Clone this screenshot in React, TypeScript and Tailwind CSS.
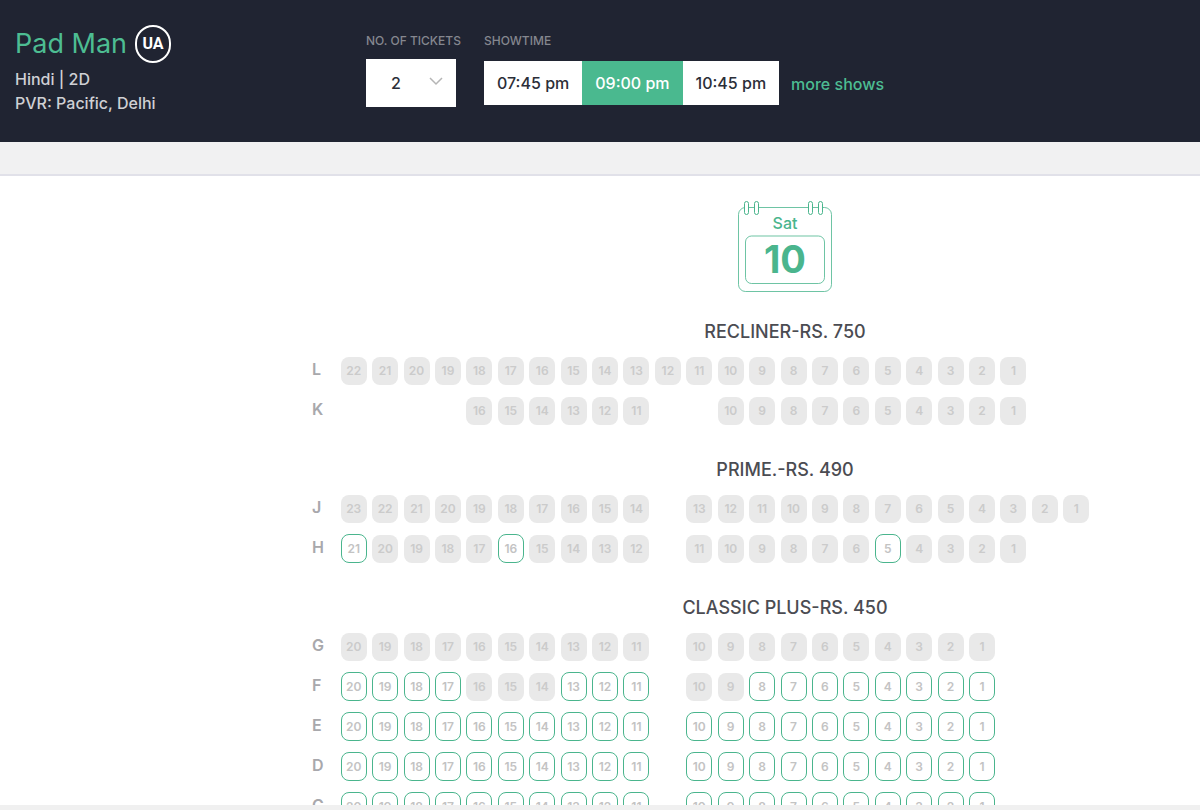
import { clsx } from "clsx";

type SeatBlock = { startCol: number; from: number; to: number };

type SeatRowData = {
  name: string;
  blocks: SeatBlock[];
  available: number[];
};

type SectionData = {
  title: string;
  rows: SeatRowData[];
};

const COLUMNS = 24;

function range(from: number, to: number) {
  return Array.from({ length: from - to + 1 }, (_, i) => from - i);
}

const CLASSIC_BLOCKS: SeatBlock[] = [
  { startCol: 1, from: 20, to: 11 },
  { startCol: 12, from: 10, to: 1 },
];

const SECTIONS: SectionData[] = [
  {
    title: "RECLINER-RS. 750",
    rows: [
      { name: "L", blocks: [{ startCol: 1, from: 22, to: 1 }], available: [] },
      {
        name: "K",
        blocks: [
          { startCol: 5, from: 16, to: 11 },
          { startCol: 13, from: 10, to: 1 },
        ],
        available: [],
      },
    ],
  },
  {
    title: "PRIME.-RS. 490",
    rows: [
      {
        name: "J",
        blocks: [
          { startCol: 1, from: 23, to: 14 },
          { startCol: 12, from: 13, to: 1 },
        ],
        available: [],
      },
      {
        name: "H",
        blocks: [
          { startCol: 1, from: 21, to: 12 },
          { startCol: 12, from: 11, to: 1 },
        ],
        available: [21, 16, 5],
      },
    ],
  },
  {
    title: "CLASSIC PLUS-RS. 450",
    rows: [
      { name: "G", blocks: CLASSIC_BLOCKS, available: [] },
      { name: "F", blocks: CLASSIC_BLOCKS, available: [...range(20, 17), ...range(13, 11), ...range(8, 1)] },
      { name: "E", blocks: CLASSIC_BLOCKS, available: range(20, 1) },
      { name: "D", blocks: CLASSIC_BLOCKS, available: range(20, 1) },
      { name: "C", blocks: CLASSIC_BLOCKS, available: range(20, 1) },
    ],
  },
];

const SHOWTIMES = ["07:45 pm", "09:00 pm", "10:45 pm"];

// one entry per grid column, null where the aisle is
function toCells(row: SeatRowData) {
  const cells: (number | null)[] = Array(COLUMNS).fill(null);
  row.blocks.forEach((b) => {
    range(b.from, b.to).forEach((seat, i) => {
      cells[b.startCol - 1 + i] = seat;
    });
  });
  return cells;
}

function Seat({ row, seat, available }: { row: string; seat: number; available: boolean }) {
  return (
    <button
      type="button"
      disabled={!available}
      aria-label={`Seat ${row}${seat}`}
      className={clsx(
        "flex w-[26px] items-center justify-center rounded-lg text-xs font-semibold",
        available ? "h-[29px] border border-[#4ab58d] bg-white text-[#c3c3c3]" : "h-7 bg-[#e9e9e9] text-[#cbcbcb]"
      )}
    >
      {seat}
    </button>
  );
}

function SeatRow({ row }: { row: SeatRowData }) {
  return (
    <div className="flex h-10 items-end pb-[6px]">
      <div className="mb-1 w-[26px] shrink-0 text-base font-semibold text-[#a8a8ac]">{row.name}</div>
      <div className="grid w-[754px] shrink-0 grid-cols-24 items-end justify-items-center">
        {toCells(row).map((seat, i) =>
          seat === null ? (
            <span key={i} />
          ) : (
            <Seat key={i} row={row.name} seat={seat} available={row.available.includes(seat)} />
          )
        )}
      </div>
    </div>
  );
}

function CalendarBadge() {
  return (
    <svg width="96" height="94" viewBox="0 0 96 94" fill="none" stroke="#4ab58d" role="img" aria-label="Sat 10">
      <rect x="1.5" y="8.5" width="93" height="84" rx="7" strokeOpacity="0.8" />
      <rect x="8.5" y="37" width="79" height="47.5" rx="6" strokeOpacity="0.8" />
      {[9, 19, 73, 83].map((x) => (
        <rect key={x} x={x - 1.5} y="2.5" width="4" height="13" rx="2" fill="white" />
      ))}
      <text
        x="48"
        y="30"
        textAnchor="middle"
        fill="#4ab58d"
        stroke="none"
        className="text-base font-medium"
      >
        Sat
      </text>
      <text
        x="48"
        y="74"
        textAnchor="middle"
        fill="#4ab58d"
        stroke="none"
        className="text-[38px] font-bold"
      >
        10
      </text>
    </svg>
  );
}

function BookingHeader() {
  return (
    <header className="flex h-[142px] shrink-0 items-start bg-[#202432]">
      <div className="w-[366px] shrink-0 pt-[25px] pl-[15px]">
        <div className="flex items-center gap-2">
          <h1 className="text-[27px] leading-[38px] text-[#4dbd92]">Pad Man</h1>
          <span className="flex h-[38px] w-9 items-center justify-center rounded-full border-2 border-white font-['Liberation_Sans_Narrow','Roboto',sans-serif] text-base font-bold text-white">
            UA
          </span>
        </div>
        <div className="mt-1 text-base leading-6 font-medium text-[#cfd0d4]">
          <div>Hindi | 2D</div>
          <div>PVR: Pacific, Delhi</div>
        </div>
      </div>

      <div className="w-[118px] shrink-0 pt-[33px]">
        <label htmlFor="tickets" className="block text-xs leading-4 font-medium whitespace-nowrap text-[#85878f]">
          NO. OF TICKETS
        </label>
        <div className="relative mt-[10px] w-[90px]">
          <select
            id="tickets"
            defaultValue="2"
            className="h-12 w-full appearance-none bg-white pl-[25px] text-base font-medium text-[#2b2e38]"
          >
            {range(10, 1).reverse().map((n) => (
              <option key={n}>{n}</option>
            ))}
          </select>
          <svg
            className="pointer-events-none absolute top-[18px] right-[13px]"
            width="14"
            height="9"
            viewBox="0 0 14 9"
            fill="none"
            stroke="#b5b5b5"
            strokeWidth="1.5"
          >
            <path d="M1 1l6 6 6-6" />
          </svg>
        </div>
      </div>

      <div className="pt-[33px]">
        <div className="text-xs leading-4 font-medium text-[#85878f]">SHOWTIME</div>
        <div className="mt-3 flex items-center gap-3">
          <div className="flex">
            {SHOWTIMES.map((time) => (
              <button
                key={time}
                type="button"
                className={clsx(
                  "h-11 px-[13px] text-base font-medium whitespace-nowrap",
                  time === "09:00 pm" ? "bg-[#4ab98f] text-white" : "bg-white text-[#2b2e38]"
                )}
              >
                {time}
              </button>
            ))}
          </div>
          <a href="#shows" className="pt-[2px] text-base font-medium whitespace-nowrap text-[#4dbd92]">
            more shows
          </a>
        </div>
      </div>
    </header>
  );
}

export default function App() {
  return (
    <div className="flex h-screen flex-col bg-white font-['Inter','Liberation_Sans',sans-serif]">
      <BookingHeader />
      <div className="h-[34px] shrink-0 border-b-2 border-[#e1e1e9] bg-[#f1f1f2]" />

      <main className="min-h-0 flex-1 overflow-x-hidden overflow-y-auto pt-[23px] pl-[312px] [scrollbar-width:none]">
        <div className="flex justify-center pl-[58px]">
          <CalendarBadge />
        </div>
        {SECTIONS.map((section) => (
          <section key={section.title}>
            <h2 className="mt-[25px] mb-[5px] pl-[58px] text-center text-lg leading-7 font-medium text-[#4b4c52]">
              {section.title}
            </h2>
            {section.rows.map((row) => (
              <SeatRow key={row.name} row={row} />
            ))}
          </section>
        ))}
      </main>

      <footer className="h-[5px] shrink-0 bg-[#f0f0f0]" />
    </div>
  );
}
